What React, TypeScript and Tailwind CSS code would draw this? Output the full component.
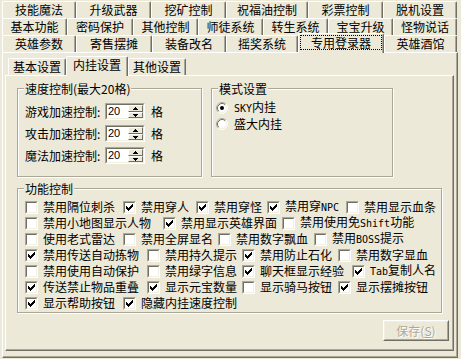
import React from 'react';

type T = { t: string; w: string; sel?: boolean };

const R1: T[] = [
  { t: '技能魔法', w: 'w-[74px]' },
  { t: '升级武器', w: 'w-[75px]' },
  { t: '挖矿控制', w: 'w-[75px]' },
  { t: '祝福油控制', w: 'w-[82px]' },
  { t: '彩票控制', w: 'w-[75px]' },
  { t: '脱机设置', w: 'w-[74px]' },
];
const R2: T[] = [
  { t: '基本功能', w: 'w-[65px]' },
  { t: '密码保护', w: 'w-[66px]' },
  { t: '其他控制', w: 'w-[65px]' },
  { t: '师徒系统', w: 'w-[65px]' },
  { t: '转生系统', w: 'w-[65px]' },
  { t: '宝宝升级', w: 'w-[65px]' },
  { t: '怪物说话', w: 'w-[64px]' },
];
const R3: T[] = [
  { t: '英雄参数', w: 'w-[74px]' },
  { t: '寄售摆摊', w: 'w-[76px]' },
  { t: '装备改名', w: 'w-[74px]' },
  { t: '摇奖系统', w: 'w-[72px]' },
  { t: '专用登录器', w: 'w-[86px]', sel: true },
  { t: '英雄酒馆', w: 'w-[73px]' },
];

type Item = [boolean, string, string];
const CHECKS: Item[][] = [
  [[false, '禁用隔位刺杀', 'w-[98px]'], [true, '禁用穿人', 'w-[73px]'], [true, '禁用穿怪', 'w-[71px]'], [true, '禁用穿NPC', 'w-[79px]'], [false, '禁用显示血条', '']],
  [[false, '禁用小地图显示人物', 'w-[138px]'], [true, '禁用显示英雄界面', 'w-[119px]'], [false, '禁用使用免Shift功能', '']],
  [[false, '使用老式雷达', 'w-[98px]'], [false, '禁用全屏显名', 'w-[95px]'], [false, '禁用数字飘血', 'w-[96px]'], [false, '禁用BOSS提示', '']],
  [[true, '禁用传送自动拣物', 'w-[122px]'], [false, '禁用持久提示', 'w-[95px]'], [true, '禁用防止石化', 'w-[96px]'], [false, '禁用数字显血', '']],
  [[false, '禁用使用自动保护', 'w-[122px]'], [false, '禁用绿字信息', 'w-[95px]'], [true, '聊天框显示经验', 'w-[110px]'], [true, 'Tab复制人名', '']],
  [[true, '传送禁止物品重叠', 'w-[122px]'], [true, '显示元宝数量', 'w-[95px]'], [false, '显示骑马按钮', 'w-[96px]'], [true, '显示摆摊按钮', '']],
  [[true, '显示帮助按钮', 'w-[98px]'], [true, '隐藏内挂速度控制', '']],
];

function Txt({ s }: { s: string }) {
  const parts = s.split(/([A-Za-z]+)/);
  return (
    <>
      {parts.map((p, i) =>
        /^[A-Za-z]+$/.test(p) ? (
          <span key={i} className="font-['DejaVu_Sans_Mono',monospace] text-[10px]">
            {p}
          </span>
        ) : (
          <React.Fragment key={i}>{p}</React.Fragment>
        )
      )}
    </>
  );
}

const tabBase =
  'flex justify-center bg-[#ECE9D8] border-l border-t border-r border-l-white border-t-white border-r-[#716F64] shadow-[inset_-1px_0_0_#ACA899] rounded-t-[2px] whitespace-nowrap leading-[12px]';

function OuterTab({ t, w, sel }: T) {
  if (sel) {
    return (
      <div className={`${w} ${tabBase} relative z-10 -mt-[2px] h-[20px] items-start pt-[1px]`}>
        <span className="flex items-center justify-center w-[82px] h-[15px] border border-dotted border-black">
          {t}
        </span>
      </div>
    );
  }
  return <div className={`${w} ${tabBase} h-[17px] items-center`}>{t}</div>;
}

function Check({ on }: { on: boolean }) {
  return (
    <span className="block shrink-0 w-[13px] h-[13px] border border-t-[#ACA899] border-l-[#ACA899] border-b-white border-r-white">
      <span className="block w-full h-full border border-t-[#716F64] border-l-[#716F64] border-b-[#F1EFE2] border-r-[#F1EFE2] bg-white">
        {on && (
          <svg width="9" height="9" viewBox="0 0 9 9" shapeRendering="crispEdges" className="block">
            <polygon
              fill="#000"
              points="1,3 2,3 2,4 3,4 3,5 4,5 4,4 5,4 5,3 6,3 6,2 7,2 7,1 8,1 8,4 7,4 7,5 6,5 6,6 5,6 5,7 4,7 4,8 3,8 3,7 2,7 2,6 1,6"
            />
          </svg>
        )}
      </span>
    </span>
  );
}

function Radio({ on }: { on: boolean }) {
  return (
    <svg width="12" height="12" viewBox="0 0 12 12" className="block shrink-0">
      <circle cx="6" cy="6" r="5" fill="#fff" />
      <path d="M2.11 9.89 A5.5 5.5 0 0 1 9.89 2.11" stroke="#ACA899" fill="none" />
      <path d="M9.89 2.11 A5.5 5.5 0 0 1 2.11 9.89" stroke="#fff" fill="none" />
      <path d="M2.82 9.18 A4.5 4.5 0 0 1 9.18 2.82" stroke="#716F64" fill="none" />
      <path d="M9.18 2.82 A4.5 4.5 0 0 1 2.82 9.18" stroke="#F1EFE2" fill="none" />
      {on && <circle cx="6" cy="6" r="2" fill="#000" />}
    </svg>
  );
}

function Arrow({ down }: { down?: boolean }) {
  return (
    <svg width="5" height="3" viewBox="0 0 5 3" shapeRendering="crispEdges" className="block">
      {down ? (
        <polygon fill="#000" points="0,0 5,0 5,1 4,1 4,2 3,2 3,3 2,3 2,2 1,2 1,1 0,1" />
      ) : (
        <polygon fill="#000" points="2,0 3,0 3,1 4,1 4,2 5,2 5,3 0,3 0,2 1,2 1,1 2,1" />
      )}
    </svg>
  );
}

function Spin({ label }: { label: string }) {
  return (
    <div className="flex items-center h-[17px]">
      <span className="w-[80px] whitespace-nowrap leading-[12px]">{label}:</span>
      <div className="flex w-[40px] h-[17px] border border-t-[#ACA899] border-l-[#ACA899] border-b-white border-r-white">
        <div className="flex flex-1 border border-t-[#716F64] border-l-[#716F64] border-b-[#F1EFE2] border-r-[#F1EFE2] bg-white">
          <span className="flex-1 pl-[1px] font-['Liberation_Sans',sans-serif] text-[11px] leading-[13px]">20</span>
          <div className="flex flex-col w-[15px]">
            <div className="flex items-center justify-center h-[7px] bg-[#ECE9D8] border border-t-white border-l-white border-b-[#716F64] border-r-[#716F64]">
              <Arrow />
            </div>
            <div className="flex items-center justify-center h-[6px] bg-[#ECE9D8] border border-t-white border-l-white border-b-[#716F64] border-r-[#716F64]">
              <Arrow down />
            </div>
          </div>
        </div>
      </div>
      <span className="ml-[6px] leading-[12px]">格</span>
    </div>
  );
}

const groupBox =
  'relative border border-[#ACA899] shadow-[inset_1px_1px_0_#fff,1px_1px_0_#fff]';
const groupTitle =
  'absolute -top-[7px] left-[6px] px-[1px] bg-[#ECE9D8] leading-[13px] whitespace-nowrap';

export default function App() {
  return (
    <div className="w-[461px] h-[359px] bg-[#ECE9D8] pl-[2px] pt-[1px] text-black text-[12px] font-['Noto_Sans_CJK_SC',sans-serif] overflow-hidden">
      {/* outer tab rows */}
      <div className="flex h-[17px]">
        {R1.map((t) => (
          <OuterTab key={t.t} {...t} />
        ))}
      </div>
      <div className="flex h-[17px]">
        {R2.map((t) => (
          <OuterTab key={t.t} {...t} />
        ))}
      </div>
      <div className="flex h-[17px] items-start">
        {R3.map((t) => (
          <OuterTab key={t.t} {...t} />
        ))}
      </div>
      {/* outer body */}
      <div className="w-[456px] h-[306px] border-t border-l border-r border-b border-t-white border-l-white border-r-[#716F64] border-b-[#716F64] shadow-[inset_-1px_-1px_0_#ACA899] pt-[3px] pl-[2px]">
        <div className="w-[449px]">
          {/* inner tabs */}
          <div className="flex h-[19px] pl-[3px] items-start">
            <div className={`w-[58px] mt-[2px] h-[17px] items-center ${tabBase}`}>基本设置</div>
            <div className={`w-[62px] h-[20px] relative z-10 items-center pb-[3px] ${tabBase}`}>内挂设置</div>
            <div className={`w-[58px] mt-[2px] h-[17px] items-center ${tabBase}`}>其他设置</div>
          </div>
          {/* inner body */}
          <div className="h-[276px] border-t border-l border-r border-b border-t-white border-l-white border-r-[#716F64] border-b-[#716F64] shadow-[inset_-1px_-1px_0_#ACA899]">
            <div className="flex mt-[12px] ml-[11px]">
              <div className={`${groupBox} w-[185px] h-[89px]`}>
                <span className={groupTitle}>速度控制(最大20格)</span>
                <div className="flex flex-col gap-[5px] pt-[14px] pl-[7px]">
                  <Spin label="游戏加速控制" />
                  <Spin label="攻击加速控制" />
                  <Spin label="魔法加速控制" />
                </div>
              </div>
              <div className={`${groupBox} ml-[9px] w-[182px] h-[89px]`}>
                <span className={groupTitle}>模式设置</span>
                <div className="flex flex-col pt-[11px] pl-[4px]">
                  <div className="flex items-center gap-[6px] h-[16px]">
                    <Radio on />
                    <span className="leading-[12px]">
                      <Txt s="SKY内挂" />
                    </span>
                  </div>
                  <div className="flex items-center gap-[6px] h-[16px]">
                    <Radio on={false} />
                    <span className="leading-[12px]">盛大内挂</span>
                  </div>
                </div>
              </div>
            </div>
            <div className={`${groupBox} mt-[11px] ml-[11px] w-[425px] h-[125px]`}>
              <span className={groupTitle}>功能控制</span>
              <div className="flex flex-col pt-[10px] pl-[7px]">
                {CHECKS.map((row, ri) => (
                  <div key={ri} className="flex h-[16px] items-center">
                    {row.map(([on, label, w]) => (
                      <div key={label} className={`flex items-center shrink-0 ${w}`}>
                        <Check on={on} />
                        <span className="ml-[5px] whitespace-nowrap leading-[12px]">
                          <Txt s={label} />
                        </span>
                      </div>
                    ))}
                  </div>
                ))}
              </div>
            </div>
            <div className="flex justify-end mt-[7px] mr-[4px]">
              <div className="w-[66px] h-[21px] border border-t-white border-l-white border-b-[#716F64] border-r-[#716F64]">
                <div className="flex items-center justify-center w-full h-full border border-t-[#F1EFE2] border-l-[#F1EFE2] border-b-[#ACA899] border-r-[#ACA899] text-[#ACA899] [text-shadow:1px_1px_0_#fff] leading-[12px]">
                  保存(<span className="underline">S</span>)
                </div>
              </div>
            </div>
          </div>
        </div>
      </div>
    </div>
  );
}
